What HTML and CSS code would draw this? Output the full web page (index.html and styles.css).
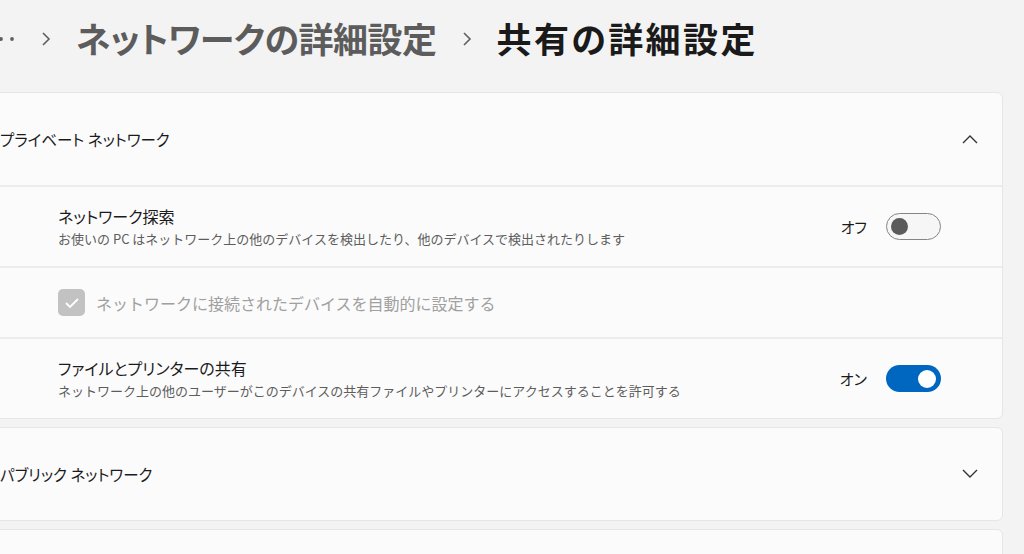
FILE: index.html
```html
<!DOCTYPE html>
<html lang="ja">
<head>
<meta charset="utf-8">
<link rel="stylesheet" href="styles.css">
</head>
<body>
<div class="page">
  <div class="breadcrumb">
    <svg class="dots" width="30" height="6" viewBox="0 0 30 6"><circle cx="4" cy="3" r="1.9"/><circle cx="15" cy="3" r="1.9"/><circle cx="26" cy="3" r="1.9"/></svg>
    <svg class="sep" width="12" height="18" viewBox="0 0 12 18"><polyline points="3,3 9,9 3,15"/></svg>
    <span class="crumb">ネットワークの詳細設定</span>
    <svg class="sep" width="12" height="18" viewBox="0 0 12 18"><polyline points="3,3 9,9 3,15"/></svg>
    <span class="crumb current">共有の詳細設定</span>
  </div>

  <div class="card">
    <div class="header">
      <span class="header-title">プライベート ネットワーク</span>
      <svg class="chev" width="18" height="10" viewBox="0 0 18 10"><polyline points="2,9 9,2 16,9"/></svg>
    </div>
    <div class="row">
      <div class="texts">
        <div class="title">ネットワーク探索</div>
        <div class="sub">お使いの PC はネットワーク上の他のデバイスを検出したり、他のデバイスで検出されたりします</div>
      </div>
      <div class="control">
        <span class="state">オフ</span>
        <span class="toggle off"><span class="knob"></span></span>
      </div>
    </div>
    <div class="row check-row">
      <span class="checkbox"><svg width="16" height="12" viewBox="0 0 16 12"><polyline points="2,6 6,10 14,2"/></svg></span>
      <span class="check-label">ネットワークに接続されたデバイスを自動的に設定する</span>
    </div>
    <div class="row">
      <div class="texts">
        <div class="title">ファイルとプリンターの共有</div>
        <div class="sub">ネットワーク上の他のユーザーがこのデバイスの共有ファイルやプリンターにアクセスすることを許可する</div>
      </div>
      <div class="control">
        <span class="state">オン</span>
        <span class="toggle on"><span class="knob"></span></span>
      </div>
    </div>
  </div>

  <div class="card">
    <div class="header">
      <span class="header-title">パブリック ネットワーク</span>
      <svg class="chev" width="18" height="10" viewBox="0 0 18 10"><polyline points="2,1 9,8 16,1"/></svg>
    </div>
  </div>

  <div class="card last"></div>
</div>
</body>
</html>
```

FILE: styles.css
```css
html, body {
  margin: 0;
  padding: 0;
  background: #f3f3f3;
  overflow: hidden;
  width: 1024px;
  height: 554px;
}
body {
  font-family: "Noto Sans CJK JP", "Noto Sans", sans-serif;
  font-feature-settings: "palt";
  color: #1b1b1b;
}
.page {
  margin-left: -22px;
  width: 1025px;
  display: flex;
  flex-direction: column;
}
.breadcrumb {
  height: 74px;
  margin-bottom: 18px;
  display: flex;
  align-items: center;
}
.dots {
  fill: #5f5f5f;
  margin-top: 4px;
  margin-left: 8px;
}
.sep {
  fill: none;
  stroke: #5f5f5f;
  stroke-width: 1.6;
  margin: 4px 24px 0 24px;
}
.crumb {
  font-size: 35px;
  font-weight: 600;
  color: #5c5c5c;
  line-height: 1;
  letter-spacing: -0.5px;
}
.crumb.current {
  color: #1a1a1a;
  letter-spacing: 2.4px;
}
.card {
  background: #fbfbfb;
  border: 1px solid #e6e6e6;
  border-radius: 6px;
  display: flex;
  flex-direction: column;
  margin-bottom: 8px;
}
.header {
  height: 92px;
  display: flex;
  align-items: center;
  justify-content: space-between;
  padding: 0 23px 0 21px;
}
.header-title {
  font-size: 15.5px;
  color: #1b1b1b;
}
.chev {
  fill: none;
  stroke: #333;
  stroke-width: 1.4;
}
.row {
  display: flex;
  align-items: center;
  justify-content: space-between;
  border-top: 2px solid #ececec;
  padding: 0 61px 0 79px;
  height: 79px;
}
.check-row {
  height: 69px;
  justify-content: flex-start;
  gap: 11px;
}
.texts {
  display: flex;
  flex-direction: column;
  gap: 2px;
}
.title {
  font-size: 16px;
  line-height: 22px;
  color: #1b1b1b;
}
.sub {
  font-size: 13px;
  line-height: 20px;
  color: #5d5d5d;
  font-feature-settings: normal;
}
.control {
  display: flex;
  align-items: center;
  gap: 19px;
}
.state {
  font-size: 15px;
  color: #1b1b1b;
}
.toggle {
  width: 55px;
  height: 27px;
  box-sizing: border-box;
  border-radius: 14px;
  display: flex;
  align-items: center;
}
.toggle.off {
  border: 1.5px solid #858585;
  background: #f6f6f6;
  padding-left: 4px;
}
.toggle.off .knob {
  width: 17px;
  height: 17px;
  background: #5b5b5b;
}
.toggle.on {
  background: #0067c0;
  justify-content: flex-end;
  padding-right: 5px;
}
.toggle.on .knob {
  width: 18px;
  height: 18px;
  background: #ffffff;
}
.knob {
  border-radius: 50%;
  display: block;
}
.checkbox {
  width: 27px;
  height: 27px;
  border-radius: 5px;
  background: #c2c2c2;
  display: flex;
  align-items: center;
  justify-content: center;
}
.checkbox svg {
  fill: none;
  stroke: #ffffff;
  stroke-width: 1.8;
}
.check-label {
  font-size: 16px;
  color: #a0a0a0;
  font-feature-settings: normal;
}
.card.last {
  height: 40px;
}
```
